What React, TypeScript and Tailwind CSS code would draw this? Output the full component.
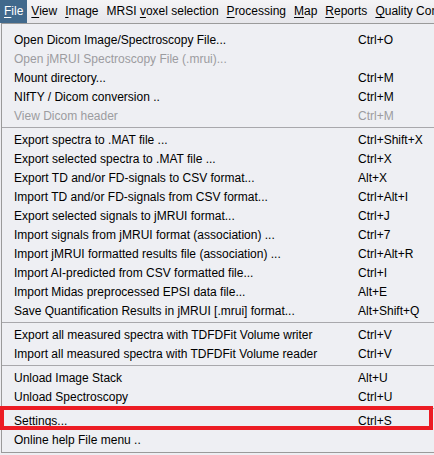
type Item = { label: string; keys?: string; disabled?: boolean } | 'sep'

const menuBar: { pre: string; key: string; post: string }[] = [
  { pre: '', key: 'F', post: 'ile' },
  { pre: '', key: 'V', post: 'iew' },
  { pre: '', key: 'I', post: 'mage' },
  { pre: 'MRSI ', key: 'v', post: 'oxel selection' },
  { pre: '', key: 'P', post: 'rocessing' },
  { pre: '', key: 'M', post: 'ap' },
  { pre: '', key: 'R', post: 'eports' },
  { pre: '', key: 'Q', post: 'uality Control' },
]

const items: Item[] = [
  { label: 'Open Dicom Image/Spectroscopy File...', keys: 'Ctrl+O' },
  { label: 'Open jMRUI Spectroscopy File (.mrui)...', disabled: true },
  { label: 'Mount directory...', keys: 'Ctrl+M' },
  { label: 'NIfTY / Dicom conversion ..', keys: 'Ctrl+M' },
  { label: 'View Dicom header', keys: 'Ctrl+M', disabled: true },
  'sep',
  { label: 'Export spectra to .MAT file ...', keys: 'Ctrl+Shift+X' },
  { label: 'Export selected spectra to .MAT file ...', keys: 'Ctrl+X' },
  { label: 'Export TD and/or FD-signals to CSV format...', keys: 'Alt+X' },
  { label: 'Import TD and/or FD-signals from CSV format...', keys: 'Ctrl+Alt+I' },
  { label: 'Export selected signals to jMRUI format...', keys: 'Ctrl+J' },
  { label: 'Import signals from jMRUI format (association) ...', keys: 'Ctrl+7' },
  { label: 'Import jMRUI formatted results file (association) ...', keys: 'Ctrl+Alt+R' },
  { label: 'Import AI-predicted from CSV formatted file...', keys: 'Ctrl+I' },
  { label: 'Import Midas preprocessed EPSI data file...', keys: 'Alt+E' },
  { label: 'Save Quantification Results in jMRUI [.mrui] format...', keys: 'Alt+Shift+Q' },
  'sep',
  { label: 'Export all measured spectra with TDFDFit Volume writer', keys: 'Ctrl+V' },
  { label: 'Import all measured spectra with TDFDFit Volume reader', keys: 'Ctrl+V' },
  'sep',
  { label: 'Unload Image Stack', keys: 'Alt+U' },
  { label: 'Unload Spectroscopy', keys: 'Ctrl+U' },
  'sep',
  { label: 'Settings...', keys: 'Ctrl+S' },
  { label: 'Online help File menu ..' },
]

export default function App() {
  return (
    <div
      className="relative w-[434px] h-[455px] overflow-hidden bg-[#eeeef2] text-[12px] leading-none text-black"
      style={{ fontFamily: '"Liberation Sans", Arial, sans-serif' }}
    >
      {/* menu bar */}
      <div className="flex h-[23px] bg-gradient-to-b from-[#f4f4f6] to-[#e6e6ea] whitespace-nowrap">
        {menuBar.map((m, i) => (
          <div
            key={i}
            className={`px-[4px] leading-[23px] ${i === 0 ? 'bg-[#41698c] text-white' : ''}`}
          >
            {m.pre}
            <span className="underline underline-offset-2">{m.key}</span>
            {m.post}
          </div>
        ))}
      </div>

      {/* File popup */}
      <div className="ml-px w-[460px] border-t border-l border-b border-[#9a9a9a] bg-[#eeeff3] pt-[6px] pb-[3px]">
        {items.map((it, i) =>
          it === 'sep' ? (
            <div key={i} className="flex h-[5px] items-center">
              <div className="h-px w-full bg-[#a8a8ac]" />
            </div>
          ) : (
            <div
              key={i}
              className={`flex h-[19px] items-center whitespace-nowrap ${it.disabled ? 'text-[#9c9ca0]' : ''}`}
            >
              <span className="w-[356px] pl-[12px]">{it.label}</span>
              <span>{it.keys}</span>
            </div>
          ),
        )}
      </div>

      {/* highlight annotation */}
      <div className="absolute left-0 top-[406px] h-[24px] w-[433px] border-4 border-[#ec1c24]" />
    </div>
  )
}
